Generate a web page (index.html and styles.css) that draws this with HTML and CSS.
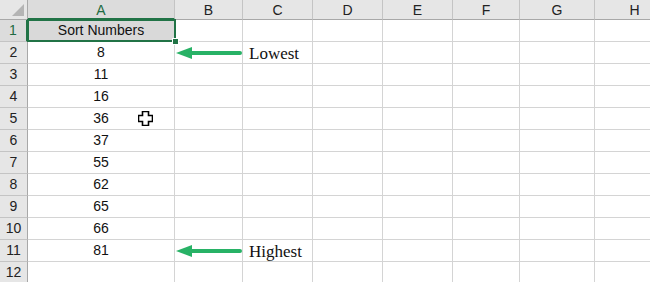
FILE: index.html
```html
<!DOCTYPE html>
<html>
<head>
    <title>Sort Numbers</title>
    <meta name="viewport" content="width=device-width, initial-scale=1">
    <link rel="stylesheet" href="styles.css">
</head>
<body>
    <div class="sheet">
        <div class="corner"><span class="tri"></span></div>
        <div class="colhead sel">A</div>
        <div class="colhead">B</div>
        <div class="colhead">C</div>
        <div class="colhead">D</div>
        <div class="colhead">E</div>
        <div class="colhead">F</div>
        <div class="colhead">G</div>
        <div class="colhead">H</div>

        <div class="rowhead sel">1</div>
        <div class="cell title">Sort Numbers<span class="selbox"></span><span class="handle"></span></div>
        <div class="cell"></div><div class="cell"></div><div class="cell"></div><div class="cell"></div><div class="cell"></div><div class="cell"></div><div class="cell"></div>

        <div class="rowhead">2</div>
        <div class="cell num">8</div>
        <div class="cell arrowcell">
            <svg class="arrow" width="68" height="12" viewBox="0 0 68 12"><path d="M0 6 L16 0 L16 12 Z" fill="#28b266"/><line x1="14" y1="6" x2="64" y2="6" stroke="#28b266" stroke-width="4" stroke-linecap="round"/></svg>
        </div>
        <div class="cell note">Lowest</div>
        <div class="cell"></div><div class="cell"></div><div class="cell"></div><div class="cell"></div><div class="cell"></div>

        <div class="rowhead">3</div>
        <div class="cell num">11</div>
        <div class="cell"></div><div class="cell"></div><div class="cell"></div><div class="cell"></div><div class="cell"></div><div class="cell"></div><div class="cell"></div>

        <div class="rowhead">4</div>
        <div class="cell num">16</div>
        <div class="cell"></div><div class="cell"></div><div class="cell"></div><div class="cell"></div><div class="cell"></div><div class="cell"></div><div class="cell"></div>

        <div class="rowhead">5</div>
        <div class="cell num">36
            <svg class="cursor" width="15" height="15" viewBox="0 0 15 15"><path d="M4.5 0.5 H10.5 V4.5 H14.5 V10.5 H10.5 V14.5 H4.5 V10.5 H0.5 V4.5 H4.5 Z" fill="#fff" stroke="#000" stroke-width="1.6"/></svg>
        </div>
        <div class="cell"></div><div class="cell"></div><div class="cell"></div><div class="cell"></div><div class="cell"></div><div class="cell"></div><div class="cell"></div>

        <div class="rowhead">6</div>
        <div class="cell num">37</div>
        <div class="cell"></div><div class="cell"></div><div class="cell"></div><div class="cell"></div><div class="cell"></div><div class="cell"></div><div class="cell"></div>

        <div class="rowhead">7</div>
        <div class="cell num">55</div>
        <div class="cell"></div><div class="cell"></div><div class="cell"></div><div class="cell"></div><div class="cell"></div><div class="cell"></div><div class="cell"></div>

        <div class="rowhead">8</div>
        <div class="cell num">62</div>
        <div class="cell"></div><div class="cell"></div><div class="cell"></div><div class="cell"></div><div class="cell"></div><div class="cell"></div><div class="cell"></div>

        <div class="rowhead">9</div>
        <div class="cell num">65</div>
        <div class="cell"></div><div class="cell"></div><div class="cell"></div><div class="cell"></div><div class="cell"></div><div class="cell"></div><div class="cell"></div>

        <div class="rowhead">10</div>
        <div class="cell num">66</div>
        <div class="cell"></div><div class="cell"></div><div class="cell"></div><div class="cell"></div><div class="cell"></div><div class="cell"></div><div class="cell"></div>

        <div class="rowhead">11</div>
        <div class="cell num">81</div>
        <div class="cell arrowcell">
            <svg class="arrow" width="68" height="12" viewBox="0 0 68 12"><path d="M0 6 L16 0 L16 12 Z" fill="#28b266"/><line x1="14" y1="6" x2="64" y2="6" stroke="#28b266" stroke-width="4" stroke-linecap="round"/></svg>
        </div>
        <div class="cell note">Highest</div>
        <div class="cell"></div><div class="cell"></div><div class="cell"></div><div class="cell"></div><div class="cell"></div>

        <div class="rowhead">12</div>
        <div class="cell"></div>
        <div class="cell"></div><div class="cell"></div><div class="cell"></div><div class="cell"></div><div class="cell"></div><div class="cell"></div><div class="cell"></div>
    </div>
</body>
</html>
```

FILE: styles.css
```css
body {
    margin: 0;
    background-color: white;
    font-family: "Liberation Sans", Arial, sans-serif;
    overflow: hidden;
}
.sheet {
    display: grid;
    grid-template-columns: 28px 147px 68px 70px 70px 70px 67px 75px 80px;
    grid-template-rows: 20px repeat(12, 22px);
    width: 655px;
}
.corner, .colhead, .rowhead, .cell {
    box-sizing: border-box;
    border-right: 1px solid #d4d4d4;
    border-bottom: 1px solid #d4d4d4;
}
.corner {
    position: relative;
    background-color: #e6e6e6;
    border-right: 1px solid #a8a8a8;
    border-bottom: 1px solid #a8a8a8;
}
.tri {
    position: absolute;
    right: 3px;
    bottom: 3px;
    width: 0;
    height: 0;
    border-left: 12px solid transparent;
    border-bottom: 12px solid #b4b4b4;
}
.colhead {
    background-color: #e6e6e6;
    border-right: 1px solid #c4c4c4;
    border-bottom: 1px solid #a8a8a8;
    text-align: center;
    font-size: 14px;
    line-height: 20px;
    color: #222;
}
.colhead.sel {
    background-color: #dcdcdc;
    color: #1e6b42;
    border-bottom: 2px solid #217346;
}
.rowhead {
    background-color: #e6e6e6;
    border-right: 1px solid #a8a8a8;
    border-bottom: 1px solid #c4c4c4;
    text-align: center;
    font-size: 14px;
    line-height: 21px;
    color: #222;
}
.rowhead.sel {
    background-color: #dcdcdc;
    color: #1e6b42;
    border-right: 2px solid #217346;
}
.cell {
    position: relative;
    font-size: 14px;
    line-height: 21px;
    color: #111;
}
.num {
    text-align: center;
}
.title {
    background-color: #d9d9d9;
    text-align: center;
}
.selbox {
    position: absolute;
    left: -1px;
    top: -1px;
    right: -2px;
    bottom: -1px;
    border: 2px solid #217346;
}
.handle {
    position: absolute;
    right: -5px;
    bottom: -4px;
    width: 5px;
    height: 5px;
    background-color: #217346;
    border: 1px solid white;
    z-index: 2;
}
.arrow {
    position: absolute;
    left: 1px;
    top: 5px;
}
.note {
    font-family: "Liberation Serif", "Times New Roman", serif;
    font-size: 17px;
    line-height: 23px;
    padding-left: 6px;
    color: #111;
}
.cursor {
    position: absolute;
    left: 110px;
    top: 3px;
}
```
